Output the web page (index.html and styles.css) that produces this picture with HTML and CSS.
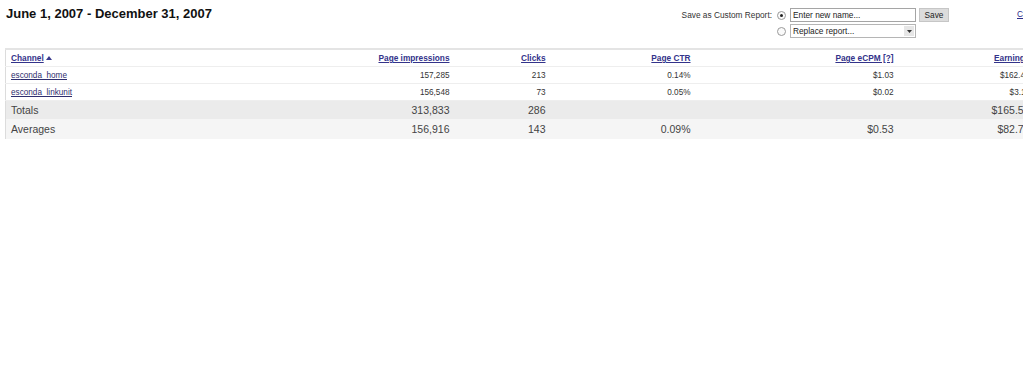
FILE: index.html
```html
<!DOCTYPE html>
<html>
<head>
<meta charset="utf-8">
<link rel="stylesheet" href="styles.css">
</head>
<body>
<div class="page">
  <div class="topbar">
    <h1 class="title">June 1, 2007 - December 31, 2007</h1>
    <div class="tools">
      <div class="saveform">
        <span class="label">Save as Custom Report:</span>
        <div class="fields">
          <div class="frow">
            <span class="radio checked"></span>
            <span class="textbox">Enter new name...</span>
            <span class="btn">Save</span>
          </div>
          <div class="frow">
            <span class="radio"></span>
            <span class="selectbox">Replace report...<span class="arrow"><svg width="5" height="3" viewBox="0 0 5 3"><path d="M0 0h5L2.5 3z" fill="#333"/></svg></span></span>
          </div>
        </div>
      </div>
      <a class="toplink">Customize</a>
    </div>
  </div>
  <table class="report">
    <colgroup>
      <col class="c1"><col class="c2"><col class="c3"><col class="c4"><col class="c5"><col class="c6">
    </colgroup>
    <thead>
      <tr>
        <th class="left"><a>Channel</a> <svg class="sort" width="6" height="4" viewBox="0 0 6 4"><path d="M0 4L3 0 6 4z" fill="#3a3a8c"/></svg></th>
        <th><a>Page impressions</a></th>
        <th><a>Clicks</a></th>
        <th><a>Page CTR</a></th>
        <th><a>Page eCPM [?]</a></th>
        <th><a>Earnings</a></th>
      </tr>
    </thead>
    <tbody>
      <tr class="data">
        <td class="left"><a>esconda_home</a></td>
        <td>157,285</td><td>213</td><td>0.14%</td><td>$1.03</td><td>$162.47</td>
      </tr>
      <tr class="data">
        <td class="left"><a>esconda_linkunit</a></td>
        <td>156,548</td><td>73</td><td>0.05%</td><td>$0.02</td><td>$3.11</td>
      </tr>
      <tr class="totals">
        <td class="left">Totals</td>
        <td>313,833</td><td>286</td><td></td><td></td><td>$165.58</td>
      </tr>
      <tr class="averages">
        <td class="left">Averages</td>
        <td>156,916</td><td>143</td><td>0.09%</td><td>$0.53</td><td>$82.79</td>
      </tr>
    </tbody>
  </table>
</div>
</body>
</html>
```
FILE: styles.css
```css
html, body {
  margin: 0;
  padding: 0;
  overflow: hidden;
  background: #fff;
}
body {
  font-family: "Liberation Sans", Arial, sans-serif;
  color: #222;
}
.page {
  width: 1090px;
  padding: 0 0 0 5px;
}
.topbar {
  display: flex;
  justify-content: space-between;
  align-items: flex-start;
  height: 48px;
}
.title {
  margin: 6px 0 0 1px;
  font-size: 13px;
  font-weight: bold;
  color: #111;
  line-height: 16px;
}
.tools {
  display: flex;
  align-items: flex-start;
}
.saveform {
  display: flex;
  align-items: flex-start;
  margin-top: 8px;
}
.label {
  font-size: 8.3px;
  color: #333;
  line-height: 14px;
  margin-right: 5px;
}
.fields {
  display: flex;
  flex-direction: column;
  gap: 2px;
}
.frow {
  display: flex;
  align-items: center;
  height: 14px;
}
.radio {
  width: 7px;
  height: 7px;
  border: 1px solid #9a9a9a;
  border-radius: 50%;
  background: #fafafa;
  margin-right: 4px;
  position: relative;
  box-sizing: content-box;
}
.radio.checked::after {
  content: "";
  position: absolute;
  left: 2px;
  top: 2px;
  width: 3px;
  height: 3px;
  border-radius: 50%;
  background: #222;
}
.textbox, .selectbox {
  box-sizing: border-box;
  width: 126px;
  height: 14px;
  border: 1px solid #a5a5a5;
  background: #fff;
  font-size: 8.3px;
  line-height: 12px;
  padding-left: 2px;
  color: #222;
  position: relative;
}
.selectbox {
  border-color: #b5b5b5;
}
.arrow {
  position: absolute;
  right: 1px;
  top: 1px;
  width: 10px;
  height: 10px;
  background: #e6e6e6;
  display: flex;
  align-items: center;
  justify-content: center;
}
.btn {
  box-sizing: border-box;
  margin-left: 3px;
  width: 30px;
  height: 14px;
  background: #dcdcdc;
  border: 1px solid #c6c6c6;
  font-size: 8.3px;
  line-height: 12px;
  text-align: center;
  color: #222;
}
.toplink {
  margin: 9px 0 0 68px;
  font-size: 8.3px;
  color: #2d2d8a;
  text-decoration: underline;
  width: 78px;
}
.report {
  border-collapse: collapse;
  table-layout: fixed;
  width: 1028px;
  border-top: 2px solid #e4e4e4;
  border-left: 1px solid #dcdcdc;
}
.c1 { width: 295px; }
.c2 { width: 153px; }
.c3 { width: 96px; }
.c4 { width: 145px; }
.c5 { width: 203px; }
.c6 { width: 136px; }
th, td {
  text-align: right;
  padding: 0 4px 0 5px;
  white-space: nowrap;
}
.left {
  text-align: left;
}
th {
  height: 16px;
  font-size: 8.3px;
  font-weight: bold;
  border-bottom: 1px solid #eee;
}
th a {
  color: #33338a;
  text-decoration: underline;
}
.sort {
  vertical-align: 1px;
}
.data td {
  height: 16px;
  font-size: 8.2px;
  color: #333;
  border-bottom: 1px solid #eee;
}
.data td a {
  color: #2e2e6e;
  text-decoration: underline;
}
.data + .totals td {
  border-top: 1px solid #cfcfcf;
}
.totals td {
  height: 18px;
  background: #ebebeb;
  font-size: 10.5px;
  color: #444;
}
.averages td {
  height: 20px;
  background: #f5f5f5;
  font-size: 10.5px;
  color: #444;
}
```
